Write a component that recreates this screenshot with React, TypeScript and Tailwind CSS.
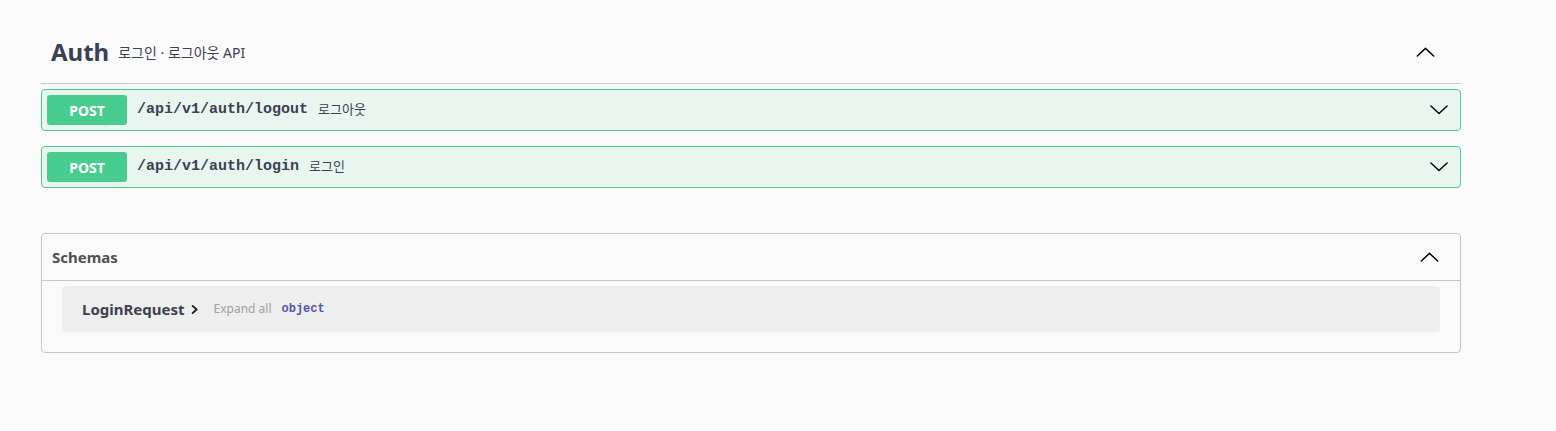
const sans = "font-['Noto_Sans','Noto_Sans_CJK_KR',sans-serif]";
const mono = "font-['Liberation_Mono','Noto_Sans_CJK_KR',monospace]";

function Arrow({ up, className }: { up?: boolean; className?: string }) {
  return (
    <svg viewBox="0 0 20 11" className={className} fill="none" stroke="currentColor" strokeWidth={1.6}>
      <polyline points={up ? "1,10 10,1.5 19,10" : "1,1 10,9.5 19,1"} strokeLinecap="round" strokeLinejoin="round" />
    </svg>
  );
}

function Operation({ path, summary }: { path: string; summary: string }) {
  return (
    <div className="mb-[15px] rounded-[4px] border border-[#49cc90] bg-[#e8f6ef]">
      <div className="flex h-[40px] items-center px-[5px]">
        <span
          className={`${sans} flex h-[30px] w-[80px] items-center justify-center rounded-[3px] bg-[#49cc90] text-[14px] font-bold text-white`}
        >
          POST
        </span>
        <span className={`${mono} ml-[10px] text-[15px] font-bold text-[#3b4151]`}>{path}</span>
        <span className={`${sans} ml-[10px] text-[13px] text-[#3b4151]`}>{summary}</span>
        <Arrow className="ml-auto mr-[7px] h-[10px] w-[18px] text-black" />
      </div>
    </div>
  );
}

export default function App() {
  return (
    <div className={`${sans} min-h-[431px] w-full bg-[#fafafa]`}>
      <div className="ml-[41px] w-[1420px] pt-[20px]">
        {/* Auth tag */}
        <div className="mb-[5px] flex h-[64px] items-center border-b border-[#c8c9cc] pl-[10px]">
          <span className="text-[24px] font-bold text-[#3b4151]">Auth</span>
          <span className="ml-[9px] mt-[2px] text-[14px] text-[#3b4151]">로그인 · 로그아웃 API</span>
          <Arrow up className="ml-auto mr-[26px] h-[10px] w-[19px] text-black" />
        </div>
        <Operation path="/api/v1/auth/logout" summary="로그아웃" />
        <Operation path="/api/v1/auth/login" summary="로그인" />

        {/* Schemas */}
        <div className="mt-[45px] rounded-[4px] border border-[#c4c6cb]">
          <div className="flex h-[47px] items-center border-b border-[#c4c6cb] pl-[10px]">
            <span className="text-[15px] font-bold text-[#505050]">Schemas</span>
            <Arrow up className="ml-auto mr-[21px] h-[10px] w-[19px] text-black" />
          </div>
          <div className="px-[20px] pb-[20px] pt-[5px]">
            <div className="flex h-[46px] items-center rounded-[4px] bg-[#eeeeee] pl-[20px]">
              <span className="text-[15px] font-bold text-[#3b4151]">LoginRequest</span>
              <svg viewBox="0 0 10 12" className="ml-[6px] h-[11px] w-[8px] text-[#222]" fill="none" stroke="currentColor" strokeWidth={2.4}>
                <polyline points="2,1.5 7,6 2,10.5" strokeLinecap="round" strokeLinejoin="round" />
              </svg>
              <span className="ml-[15px] text-[12px] text-[#a0a0a0]">Expand all</span>
              <span className={`${mono} ml-[10px] text-[12px] font-bold text-[#55a]`}>object</span>
            </div>
          </div>
        </div>
      </div>
    </div>
  );
}
